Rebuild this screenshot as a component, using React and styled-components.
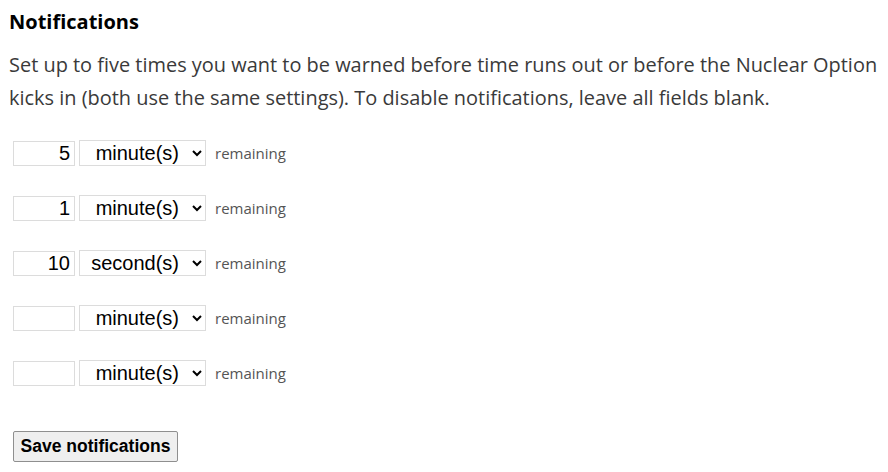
import styled, { createGlobalStyle } from 'styled-components';

const GlobalStyle = createGlobalStyle`
  body {
    margin: 0;
    background: #ffffff;
  }
`;

const Container = styled.div`
  padding: 8px 0 0 9px;
  font-family: 'Open Sans', sans-serif;
`;

const Title = styled.h2`
  margin: 0;
  font-size: 20px;
  font-weight: 700;
  line-height: 28px;
  color: #000;
`;

const Description = styled.p`
  margin: 12px 0 26px;
  font-size: 19.95px;
  line-height: 33px;
  color: #3a3a3a;
`;

const Rows = styled.div`
  display: flex;
  flex-direction: column;
  gap: 29px;
  padding-left: 4px;
`;

const Row = styled.div`
  display: flex;
  align-items: center;
  gap: 4px;
  height: 26px;
`;

const NumberInput = styled.input`
  box-sizing: border-box;
  width: 62px;
  height: 25px;
  padding: 0 4px;
  border: 1px solid #dcdcdc;
  text-align: right;
  font-family: 'Liberation Sans', Arial, sans-serif;
  font-size: 20px;
  color: #000;
  background: #fff;
  outline: none;
`;

const UnitSelect = styled.select`
  box-sizing: border-box;
  width: 127px;
  height: 26px;
  padding: 0 10px 0 0;
  border: 1px solid #dcdcdc;
  border-radius: 0;
  background: #fff;
  text-align: right;
  text-align-last: right;
  font-family: 'Liberation Sans', Arial, sans-serif;
  font-size: 20px;
  color: #000;
`;

const Remaining = styled.span`
  margin-left: 5px;
  font-size: 15px;
  color: #555;
`;

const SaveButton = styled.button`
  margin: 45px 0 0 4px;
  box-sizing: border-box;
  width: 165px;
  height: 31px;
  padding: 0;
  border: 1px solid #8f8f8f;
  border-radius: 2px;
  background: #efefef;
  font-family: 'Liberation Sans', Arial, sans-serif;
  font-size: 17.5px;
  font-weight: 700;
  color: #000;
`;

const notifications = [
  { value: '5', unit: 'minute' },
  { value: '1', unit: 'minute' },
  { value: '10', unit: 'second' },
  { value: '', unit: 'minute' },
  { value: '', unit: 'minute' },
];

const App = () => {
  return (
    <Container>
      <GlobalStyle />
      <Title>Notifications</Title>
      <Description>
        Set up to five times you want to be warned before time runs out or before the Nuclear Option kicks in (both
        use the same settings). To disable notifications, leave all fields blank.
      </Description>
      <Rows>
        {notifications.map((item, i) => (
          <Row key={i}>
            <NumberInput type="text" defaultValue={item.value} />
            <UnitSelect defaultValue={item.unit}>
              <option value="second">second(s)</option>
              <option value="minute">minute(s)</option>
              <option value="hour">hour(s)</option>
            </UnitSelect>
            <Remaining>remaining</Remaining>
          </Row>
        ))}
      </Rows>
      <SaveButton>Save notifications</SaveButton>
    </Container>
  );
};

export default App;
